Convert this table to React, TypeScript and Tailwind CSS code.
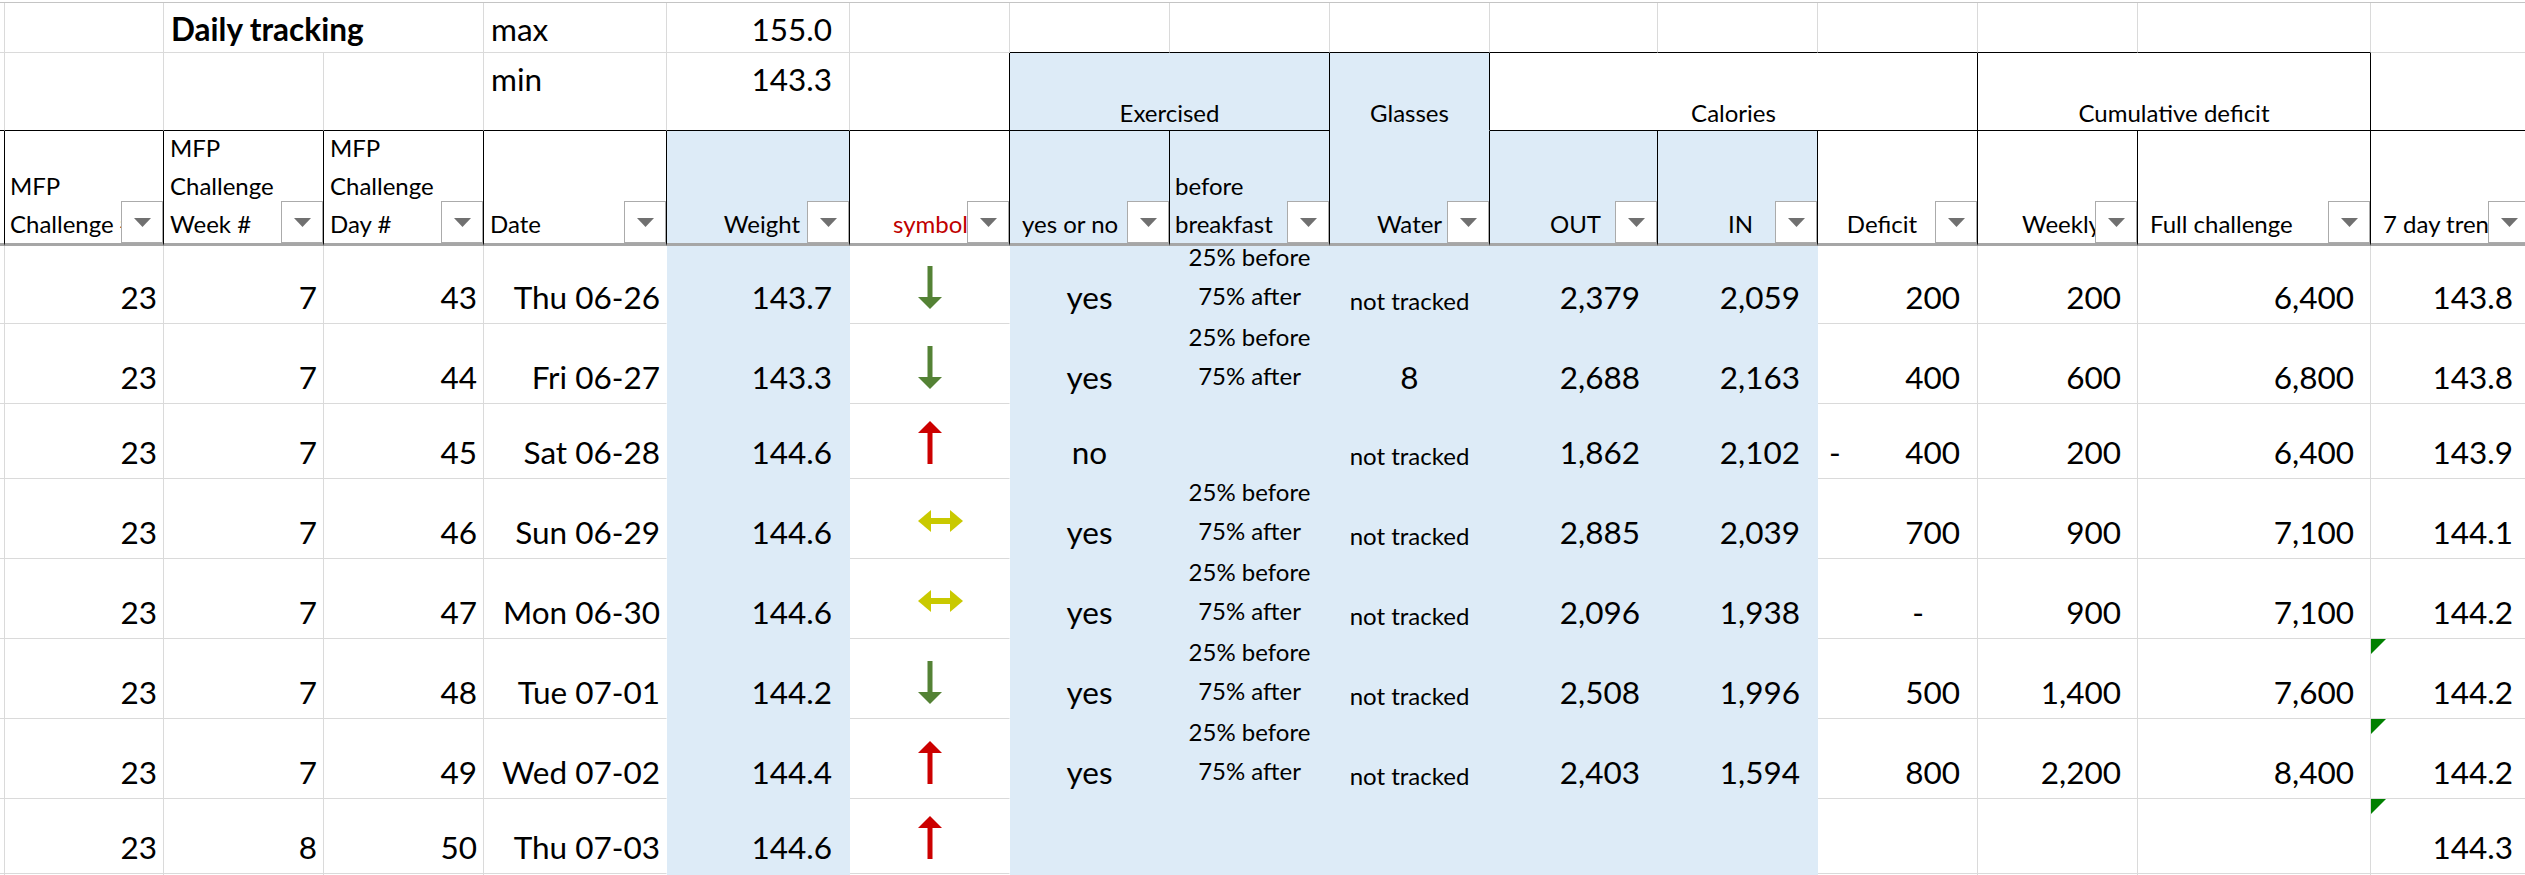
import React from 'react';

type Trend = 'down' | 'up' | 'flat';

interface DayRow {
  challenge: number;
  week: number;
  day: number;
  date: string;
  weight: string;
  trend: Trend;
  exercised: string;
  split: boolean;
  water: string;
  out: string;
  caloriesIn: string;
  deficit: string;
  weekly: string;
  full: string;
  avg: string;
  note: boolean;
}

const rows: DayRow[] = [
  { challenge: 23, week: 7, day: 43, date: 'Thu 06-26', weight: '143.7', trend: 'down', exercised: 'yes', split: true, water: 'not tracked', out: '2,379', caloriesIn: '2,059', deficit: '200', weekly: '200', full: '6,400', avg: '143.8', note: false },
  { challenge: 23, week: 7, day: 44, date: 'Fri 06-27', weight: '143.3', trend: 'down', exercised: 'yes', split: true, water: '8', out: '2,688', caloriesIn: '2,163', deficit: '400', weekly: '600', full: '6,800', avg: '143.8', note: false },
  { challenge: 23, week: 7, day: 45, date: 'Sat 06-28', weight: '144.6', trend: 'up', exercised: 'no', split: false, water: 'not tracked', out: '1,862', caloriesIn: '2,102', deficit: '-400', weekly: '200', full: '6,400', avg: '143.9', note: false },
  { challenge: 23, week: 7, day: 46, date: 'Sun 06-29', weight: '144.6', trend: 'flat', exercised: 'yes', split: true, water: 'not tracked', out: '2,885', caloriesIn: '2,039', deficit: '700', weekly: '900', full: '7,100', avg: '144.1', note: false },
  { challenge: 23, week: 7, day: 47, date: 'Mon 06-30', weight: '144.6', trend: 'flat', exercised: 'yes', split: true, water: 'not tracked', out: '2,096', caloriesIn: '1,938', deficit: '-', weekly: '900', full: '7,100', avg: '144.2', note: false },
  { challenge: 23, week: 7, day: 48, date: 'Tue 07-01', weight: '144.2', trend: 'down', exercised: 'yes', split: true, water: 'not tracked', out: '2,508', caloriesIn: '1,996', deficit: '500', weekly: '1,400', full: '7,600', avg: '144.2', note: true },
  { challenge: 23, week: 7, day: 49, date: 'Wed 07-02', weight: '144.4', trend: 'up', exercised: 'yes', split: true, water: 'not tracked', out: '2,403', caloriesIn: '1,594', deficit: '800', weekly: '2,200', full: '8,400', avg: '144.2', note: true },
  { challenge: 23, week: 8, day: 50, date: 'Thu 07-03', weight: '144.6', trend: 'up', exercised: '', split: false, water: '', out: '', caloriesIn: '', deficit: '', weekly: '', full: '', avg: '144.3', note: true },
];

// gridline / fill helpers
const grid = 'border-r border-b border-r-[#dadada] border-b-[#dadada]';
const gridEdge = 'border-r border-b border-r-white border-b-[#dadada]';
const blue = 'border-r border-b border-r-[#ddebf7] border-b-[#ddebf7] bg-[#ddebf7]';
const topOfHeader = 'border-r border-b border-r-[#dadada] border-b-black';
const groupTop = 'border-r border-b border-r-[#dadada] border-b-black';
const head = 'relative flex flex-col justify-end border-r border-b-[3px] border-r-black border-b-[#a6a6a6] text-[24px] leading-[38px] overflow-hidden';

function FilterButton() {
  return (
    <div className="absolute right-0 bottom-0 z-10 flex h-[42px] w-[42px] items-center justify-center border border-[#ababab] bg-white">
      <svg width="17" height="9" viewBox="0 0 17 9">
        <polygon points="0,0 17,0 8.5,9" fill="#707070" />
      </svg>
    </div>
  );
}

function Arrow({ trend }: { trend: Trend }) {
  if (trend === 'down') {
    return (
      <svg width="24" height="43" viewBox="0 0 24 43">
        <rect x="9.5" y="0" width="5" height="32" fill="#548235" />
        <polygon points="0,31 24,31 12,43" fill="#548235" />
      </svg>
    );
  }
  if (trend === 'up') {
    return (
      <svg width="24" height="43" viewBox="0 0 24 43">
        <polygon points="12,0 0,12 24,12" fill="#cc0000" />
        <rect x="9.5" y="11" width="5" height="32" fill="#cc0000" />
      </svg>
    );
  }
  return (
    <svg width="45" height="22" viewBox="0 0 45 22">
      <polygon points="0,11 13,0 13,22" fill="#c9c900" />
      <polygon points="45,11 32,0 32,22" fill="#c9c900" />
      <rect x="12" y="8" width="21" height="6" fill="#c9c900" />
    </svg>
  );
}

function Deficit({ value }: { value: string }) {
  if (value === '-400') {
    return (
      <div className={`${grid} flex items-end justify-between pl-[11px] pr-[17px] pb-[8px] text-[31.5px] leading-[36px]`}>
        <span>-</span>
        <span>400</span>
      </div>
    );
  }
  if (value === '-') {
    return <div className={`${grid} flex items-end justify-end pr-[53px] pb-[8px] text-[31.5px] leading-[36px]`}>-</div>;
  }
  return <div className={`${grid} flex items-end justify-end pr-[17px] pb-[8px] text-[31.5px] leading-[36px]`}>{value}</div>;
}

function DataRow({ r }: { r: DayRow }) {
  return (
    <>
      <div className={grid} />
      <div className={`${grid} flex items-end justify-end pr-[6px] pb-[8px] text-[31.5px] leading-[36px]`}>{r.challenge}</div>
      <div className={`${grid} flex items-end justify-end pr-[6px] pb-[8px] text-[31.5px] leading-[36px]`}>{r.week}</div>
      <div className={`${grid} flex items-end justify-end pr-[6px] pb-[8px] text-[31.5px] leading-[36px]`}>{r.day}</div>
      <div className={`${gridEdge} flex items-end justify-end pr-[6px] pb-[8px] text-[31.5px] leading-[36px] whitespace-nowrap`}>{r.date}</div>
      <div className={`${blue} flex items-end justify-end pr-[17px] pb-[8px] text-[31.5px] leading-[36px]`}>{r.weight}</div>
      <div className={`${gridEdge} flex items-end pl-[68px] ${r.trend === 'flat' ? 'pb-[26px]' : 'pb-[14px]'}`}>
        <Arrow trend={r.trend} />
      </div>
      <div className={`${blue} flex items-end justify-center pb-[8px] text-[31.5px] leading-[36px]`}>{r.exercised}</div>
      <div className={`${blue} flex flex-col items-center justify-end pb-[8px] text-[24px] leading-[39px] whitespace-nowrap`}>
        {r.split && (
          <>
            <span>25% before</span>
            <span>75% after</span>
          </>
        )}
      </div>
      {r.water === '8' ? (
        <div className={`${blue} flex items-end justify-center pb-[8px] text-[31.5px] leading-[36px]`}>8</div>
      ) : (
        <div className={`${blue} flex items-end justify-center pb-[3px] text-[24px] leading-[39px] whitespace-nowrap`}>{r.water}</div>
      )}
      <div className={`${blue} flex items-end justify-end pr-[17px] pb-[8px] text-[31.5px] leading-[36px]`}>{r.out}</div>
      <div className={`${blue} flex items-end justify-end pr-[17px] pb-[8px] text-[31.5px] leading-[36px]`}>{r.caloriesIn}</div>
      <Deficit value={r.deficit} />
      <div className={`${grid} flex items-end justify-end pr-[16px] pb-[8px] text-[31.5px] leading-[36px]`}>{r.weekly}</div>
      <div className={`${grid} flex items-end justify-end pr-[16px] pb-[8px] text-[31.5px] leading-[36px]`}>{r.full}</div>
      <div className={`${grid} relative flex items-end justify-end pr-[17px] pb-[8px] text-[31.5px] leading-[36px]`}>
        {r.note && (
          <svg className="absolute left-0 top-0" width="15" height="15" viewBox="0 0 15 15">
            <polygon points="0,0 15,0 0,15" fill="#008000" />
          </svg>
        )}
        {r.avg}
      </div>
    </>
  );
}

export default function App() {
  return (
    <div className="h-[875px] w-[2525px] overflow-hidden bg-white font-['Lato',sans-serif] text-black">
      <div className="grid w-[2531px] grid-cols-[5px_159px_160px_160px_183px_183px_160px_160px_160px_160px_168px_160px_160px_160px_233px_160px] grid-rows-[3px_50px_78px_115px_78px_80px_75px_80px_80px_80px_80px_75px_20px]">
        {/* top strip */}
        <div className="col-span-16 border-b border-b-[#c4c4c4]" />

        {/* row 1 */}
        <div className={grid} />
        <div className={grid} />
        <div className="border-b border-b-[#dadada] whitespace-nowrap pl-[7px] pt-[8px] text-[31.5px] font-bold leading-[36px]">Daily tracking</div>
        <div className={grid} />
        <div className={`${grid} pl-[7px] pt-[8px] text-[31.5px] leading-[36px]`}>max</div>
        <div className={`${grid} pr-[17px] pt-[8px] text-right text-[31.5px] leading-[36px]`}>155.0</div>
        <div className={grid} />
        <div className={groupTop} />
        <div className={groupTop} />
        <div className={groupTop} />
        <div className={groupTop} />
        <div className={groupTop} />
        <div className={groupTop} />
        <div className={groupTop} />
        <div className={groupTop} />
        <div className={grid} />

        {/* row 2 */}
        <div className={topOfHeader} />
        <div className={topOfHeader} />
        <div className={topOfHeader} />
        <div className={topOfHeader} />
        <div className={`${topOfHeader} pl-[7px] pt-[8px] text-[31.5px] leading-[36px]`}>min</div>
        <div className={`${topOfHeader} pr-[17px] pt-[8px] text-right text-[31.5px] leading-[36px]`}>143.3</div>
        <div className="border-r border-b border-r-black border-b-black" />
        <div className="col-span-2 flex items-end justify-center border-r border-b border-r-black border-b-black bg-[#ddebf7] pb-[2px] text-[24px] leading-[30px]">Exercised</div>
        <div className="flex items-end justify-center border-r border-b border-r-black border-b-[#ddebf7] bg-[#ddebf7] pb-[2px] text-[24px] leading-[30px]">Glasses</div>
        <div className="col-span-3 flex items-end justify-center border-r border-b border-r-black border-b-black pb-[2px] text-[24px] leading-[30px]">Calories</div>
        <div className="col-span-2 flex items-end justify-center border-r border-b border-r-black border-b-black pb-[2px] text-[24px] leading-[30px]">Cumulative deficit</div>
        <div className={topOfHeader} />

        {/* header row */}
        <div className={head} />
        <div className={`${head} pl-[5px]`}>
          <span>MFP</span>
          <span className="whitespace-nowrap">Challenge #</span>
          <FilterButton />
        </div>
        <div className={`${head} pl-[6px]`}>
          <span>MFP</span>
          <span>Challenge</span>
          <span>Week #</span>
          <FilterButton />
        </div>
        <div className={`${head} pl-[6px]`}>
          <span>MFP</span>
          <span>Challenge</span>
          <span>Day #</span>
          <FilterButton />
        </div>
        <div className={`${head} pl-[6px]`}>
          <span>Date</span>
          <FilterButton />
        </div>
        <div className={`${head} items-end bg-[#ddebf7] pr-[49px]`}>
          <span>Weight</span>
          <FilterButton />
        </div>
        <div className={`${head} items-end pr-[41px] text-[#c00000]`}>
          <span>symbol</span>
          <FilterButton />
        </div>
        <div className={`${head} bg-[#ddebf7] pl-[12px]`}>
          <span className="whitespace-nowrap">yes or no</span>
          <FilterButton />
        </div>
        <div className={`${head} bg-[#ddebf7] pl-[5px]`}>
          <span>before</span>
          <span>breakfast</span>
          <FilterButton />
        </div>
        <div className={`${head} items-center bg-[#ddebf7]`}>
          <span>Water</span>
          <FilterButton />
        </div>
        <div className={`${head} items-end bg-[#ddebf7] pr-[56px]`}>
          <span>OUT</span>
          <FilterButton />
        </div>
        <div className={`${head} items-end bg-[#ddebf7] pr-[64px]`}>
          <span>IN</span>
          <FilterButton />
        </div>
        <div className={`${head} items-end pr-[60px]`}>
          <span>Deficit</span>
          <FilterButton />
        </div>
        <div className={`${head} items-end pr-[36px]`}>
          <span>Weekly</span>
          <FilterButton />
        </div>
        <div className={`${head} pl-[12px]`}>
          <span className="whitespace-nowrap">Full challenge</span>
          <FilterButton />
        </div>
        <div className={`${head} pl-[12px]`}>
          <span className="whitespace-nowrap">7 day trend</span>
          <FilterButton />
        </div>

        {/* data */}
        {rows.map((r) => (
          <DataRow key={r.day} r={r} />
        ))}

        {/* next row peeking in */}
        <div className={grid} />
        <div className={grid} />
        <div className={grid} />
        <div className={grid} />
        <div className={gridEdge} />
        <div className={blue} />
        <div className={gridEdge} />
        <div className={blue} />
        <div className={blue} />
        <div className={blue} />
        <div className={blue} />
        <div className={blue} />
        <div className={grid} />
        <div className={grid} />
        <div className={grid} />
        <div className={grid} />
      </div>
    </div>
  );
}
